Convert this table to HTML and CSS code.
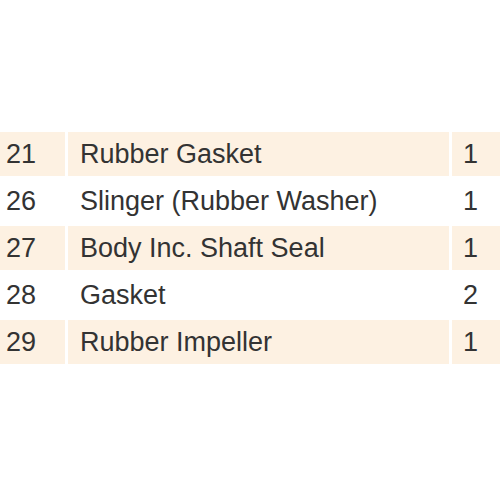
FILE: index.html
```html
<!DOCTYPE html>
<html>
<head>
<meta charset="utf-8">
<link rel="stylesheet" href="styles.css">
</head>
<body>
<div class="parts">
  <div class="row shaded"><div class="cell num">21</div><div class="cell name">Rubber Gasket</div><div class="cell qty">1</div></div>
  <div class="row"><div class="cell num">26</div><div class="cell name">Slinger (Rubber Washer)</div><div class="cell qty">1</div></div>
  <div class="row shaded"><div class="cell num">27</div><div class="cell name">Body Inc. Shaft Seal</div><div class="cell qty">1</div></div>
  <div class="row"><div class="cell num">28</div><div class="cell name">Gasket</div><div class="cell qty">2</div></div>
  <div class="row shaded"><div class="cell num">29</div><div class="cell name">Rubber Impeller</div><div class="cell qty">1</div></div>
</div>
</body>
</html>
```
FILE: styles.css
```css
html, body {
  margin: 0;
  padding: 0;
  background: #ffffff;
}
body {
  width: 500px;
  height: 500px;
  overflow: hidden;
  font-family: "Liberation Sans", Arial, sans-serif;
  color: #333333;
}
.parts {
  padding-top: 132px;
  display: flex;
  flex-direction: column;
  gap: 3px;
}
.row {
  display: grid;
  grid-template-columns: 65px 381px 48px;
  column-gap: 3px;
  height: 44px;
}
.cell {
  font-size: 27px;
  line-height: 44px;
  white-space: nowrap;
}
.shaded .cell {
  background: #fdf1e2;
}
.num {
  padding-left: 6px;
}
.name {
  padding-left: 12px;
}
.qty {
  padding-left: 11px;
}
```
